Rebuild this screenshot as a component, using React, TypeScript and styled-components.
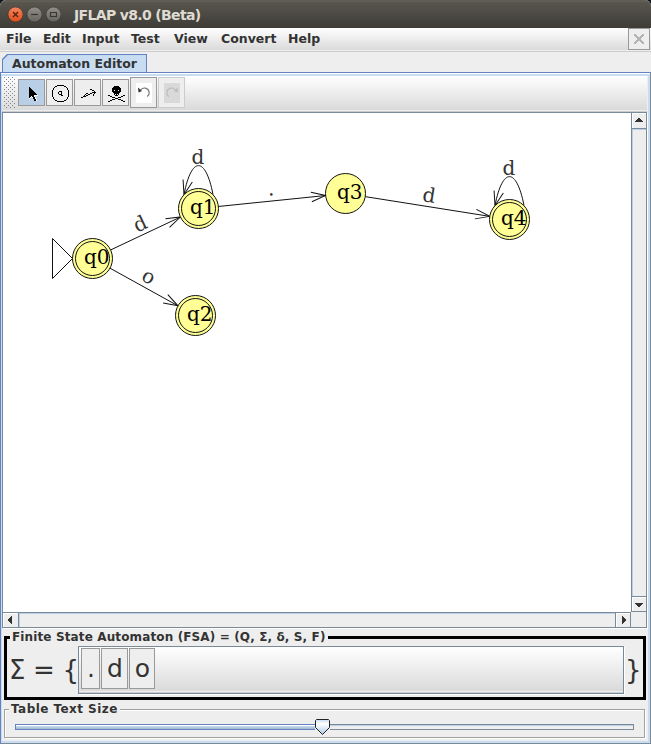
import React from 'react';
import styled, { createGlobalStyle, css } from 'styled-components';

const GlobalStyle = createGlobalStyle`
  * { box-sizing: border-box; }
  body { margin: 0; background: #eee; overflow: hidden; }
`;

const steel = '#7a8a99';
const blue = '#6382bf';
const paleBlue = '#c8ddf2';
const ink = '#333';

const Window = styled.div`
  width: 651px;
  height: 744px;
  display: flex;
  flex-direction: column;
  background: #eee;
  color: ${ink};
  font: bold 12.5px/16px 'DejaVu Sans', sans-serif;
  white-space: nowrap;
`;

const TitleBar = styled.header`
  height: 28px;
  flex: none;
  display: flex;
  align-items: center;
  padding-left: 7px;
  gap: 3px;
  border-radius: 6px 6px 0 0;
  background: linear-gradient(#55524a 0, #69665d 1px, #59564e 2px, #3d3c37 100%);
  box-shadow: 0 -6px 0 6px #11131c;
  clip-path: inset(0);
`;

const TitleText = styled.h1`
  margin: 2px 0 0 10px;
  font: bold 14px/18px 'DejaVu Sans', sans-serif;
  letter-spacing: -0.65px;
  color: #dfdbd2;
`;

const MenuBar = styled.nav`
  height: 24px;
  flex: none;
  display: flex;
  align-items: flex-start;
  padding-left: 6px;
  border-bottom: 1px solid #ccc;
  background: linear-gradient(#fff, #dadada 22px, #eee 22px);
`;

const MenuItem = styled.span<{ $w: number }>`
  width: ${p => p.$w}px;
  padding-top: 3px;
`;

const CloseButton = styled.button`
  width: 22px;
  height: 22px;
  margin: 0 1px 0 auto;
  padding: 0;
  border: 1px solid #999;
  background: #eee;
  display: flex;
`;

const TabStrip = styled.div`
  height: 20px;
  flex: none;
  padding: 2px 0 0 2px;
`;

const Tab = styled.div`
  width: 145px;
  height: 18px;
  padding: 2px 0 0 10px;
  background: ${blue};
  clip-path: polygon(5px 0, 100% 0, 100% 100%, 0 100%, 0 5px);
  position: relative;
  z-index: 0;
  &::before {
    content: '';
    position: absolute;
    z-index: -1;
    inset: 1px 1px 0 1px;
    background: ${paleBlue};
    clip-path: polygon(5px 0, 100% 0, 100% 100%, 0 100%, 0 5px);
  }
`;

const Frame = styled.main`
  flex: 1;
  min-height: 0;
  display: flex;
  flex-direction: column;
  border: 1px solid;
  border-color: ${blue} ${steel} ${steel} ${blue};
  box-shadow: inset 0 1px #fff, inset 0 3px ${paleBlue}, inset -2px 0 ${paleBlue},
    inset 0 -2px ${paleBlue}, inset 1px 0 ${paleBlue};
  padding: 3px 3px 3px 1px;
`;

const ToolBar = styled.div`
  height: 36px;
  flex: none;
  display: flex;
  align-items: center;
  padding: 0 0 2px 2px;
  border-bottom: 1px solid #ccc;
  background: linear-gradient(#fff, #dadada 34px, #eee 34px);
`;

const Grip = styled.div`
  width: 11px;
  height: 32px;
  margin-right: 3px;
  background:
    radial-gradient(circle at 0.5px 0.5px, #7f8790 0.7px, transparent 0.8px) 0 0 / 4px 4px,
    radial-gradient(circle at 0.5px 0.5px, #7f8790 0.7px, transparent 0.8px) 2px 2px / 4px 4px;
`;

const ToolButton = styled.button<{ $active?: boolean; $tall?: boolean; $disabled?: boolean }>`
  width: 27px;
  height: ${p => (p.$tall ? 31 : 27)}px;
  margin-right: 1px;
  padding: ${p => (p.$tall ? 0 : '2px 0 0 2px')};
  display: grid;
  place-items: center;
  border: 1px solid ${p => (p.$disabled ? '#ccc' : '#999')};
  background: ${p => (p.$active ? '#b8cfe5' : '#eee')};
  svg { display: block; }
`;

const ScrollPane = styled.div`
  height: 516px;
  width: 645px;
  flex: none;
  display: grid;
  grid-template: 499px 15px / 628px 15px;
  border: 1px solid ${steel};
  box-shadow: 1px 1px #fff;
`;

const Canvas = styled.div`
  background: #fff;
  svg { display: block; }
`;

const ScrollBar = styled.div<{ $vertical?: boolean }>`
  display: flex;
  background: #eee;
  ${p => p.$vertical
    ? css`flex-direction: column; border-left: 1px solid ${steel}; border-bottom: 1px solid ${steel};`
    : css`border-top: 1px solid ${steel}; border-right: 1px solid ${steel};`}
`;

const ScrollThumb = styled.div<{ $vertical?: boolean }>`
  flex: 1;
  border: solid ${steel};
  border-width: ${p => (p.$vertical ? '1px 0' : '0 1px')};
  box-shadow: inset 1px 1px #b8cfe5;
`;

const ArrowButton = styled.button<{ $w: number; $h: number }>`
  width: ${p => p.$w}px;
  height: ${p => p.$h}px;
  flex: none;
  border: 0;
  padding: 0;
  background: #eee;
  box-shadow: inset 1px 1px #fff;
  svg { display: block; }
`;

const Corner = styled.div`
  background: #eee;
`;

const Group = styled.fieldset<{ $heavy?: boolean }>`
  min-width: 0;
  height: ${p => (p.$heavy ? 71 : 37)}px;
  width: ${p => (p.$heavy ? 642 : 641)}px;
  flex: none;
  margin: ${p => (p.$heavy ? '1px 0 0 2px' : '1px 0 0 2px')};
  padding: 0;
  border: ${p => (p.$heavy ? '3px solid #000' : '1px solid #a0a0a0')};
  ${p => !p.$heavy && css`box-shadow: inset 1px 1px #fff, 1px 1px #fff;`}
`;

const Legend = styled.legend<{ $inset: number; $spacing: number }>`
  height: 16px;
  margin-left: ${p => p.$inset}px;
  padding: 0 2px;
  font-size: 12px;
  line-height: 16px;
  letter-spacing: ${p => p.$spacing}px;
  background: #eee;
`;

const AlphabetRow = styled.div`
  height: 49px;
  display: flex;
  align-items: flex-start;
  padding: 1px 0 0 2px;
  font: 26px/48px 'DejaVu Sans', sans-serif;
`;

const SetText = styled.span<{ $w: number; $shift?: number }>`
  width: ${p => p.$w}px;
  padding-left: ${p => p.$shift ?? 0}px;
  letter-spacing: ${p => (p.$shift ? 0 : -0.3)}px;
`;

const SymbolBar = styled.div`
  width: 546px;
  height: 48px;
  display: flex;
  gap: 1px;
  padding: 1px 0 0 2px;
  border: 1px solid ${steel};
  background: linear-gradient(#fff, #dadada 44px, #eee 44px, #eee 45px, #ccc 45px);
  box-shadow: 1px 1px #fff;
`;

const SymbolButton = styled.button<{ $w: number }>`
  width: ${p => p.$w}px;
  height: 41px;
  padding: 0 0 0 1px;
  border: 1px solid #999;
  background: #eee;
  color: ${ink};
  font: 25px/38px 'DejaVu Sans', sans-serif;
  text-align: center;
`;

const SliderRow = styled.div`
  height: 19px;
  display: flex;
  align-items: center;
  padding: 1px 10px 0 10px;
`;

const SliderFill = styled.div`
  width: 300px;
  height: 6px;
  border: 1px solid ${blue};
  border-right: 0;
  background: linear-gradient(#fff 1px, #c8ddf2 1px, #a3b8cc);
`;

const SliderRest = styled.div`
  flex: 1;
  height: 6px;
  border: 1px solid ${steel};
  border-left: 0;
  box-shadow: inset 0 1px #b8cfe5;
`;

const SliderThumb = styled.svg`
  display: block;
  width: 15px;
  height: 16px;
  flex: none;
`;

const RoundButton = ({ kind }: { kind: 'close' | 'min' | 'max' }) => (
  <svg width="16" height="18" viewBox="0 0 16 18">
    <defs>
      <linearGradient id={`g-${kind}`} x2="0" y2="1">
        <stop offset="0" stopColor={kind === 'close' ? '#f68660' : '#929088'} />
        <stop offset="1" stopColor={kind === 'close' ? '#df4c19' : '#65635b'} />
      </linearGradient>
    </defs>
    <circle cx="8.5" cy="9.5" r="7.5" fill={`url(#g-${kind})`} stroke="#33322e" strokeWidth=".6" />
    {kind === 'close' && <path d="M6 7l5 5m0-5l-5 5" stroke="#54200e" strokeWidth="1.3" />}
    {kind === 'min' && <path d="M5 9.5h7" stroke="#37352f" strokeWidth="1.2" />}
    {kind === 'max' && <path d="M5.5 7.5h6v4h-6z" fill="none" stroke="#37352f" strokeWidth="1.1" />}
  </svg>
);

/** Draws a bitmap icon: "#" is a black pixel, "o" a white one. */
const PixelIcon = ({ rows }: { rows: string[] }) => {
  const w = Math.max(...rows.map(r => r.length));
  const trace = (mark: string) =>
    rows.map((r, y) => [...r].map((c, x) => (c === mark ? `M${x} ${y}h1v1h-1z` : '')).join('')).join('');
  return (
    <svg width={w} height={rows.length} shapeRendering="crispEdges">
      <path d={trace('o')} fill="#fff" />
      <path d={trace('#')} fill="#000" />
    </svg>
  );
};

const cursorRows = [
  '...........',
  '..#........',
  '..##.......',
  '..###......',
  '..####.....',
  '..#####....',
  '..######...',
  '..#######..',
  '..########.',
  '..#####oooo',
  '..##o##o...',
  '..#o.o##o..',
  '..o...##o..',
  '.......##o.',
  '.......##o.',
];

const stateRows = [
  '.....#######.....',
  '...##.......##...',
  '..#...........#..',
  '.#.............#.',
  '.#.............#.',
  '#...............#',
  '#......###......#',
  '#.....#..#......#',
  '#.....#..#......#',
  '#......###......#',
  '#........##.....#',
  '#...............#',
  '.#.............#.',
  '.#.............#.',
  '..#...........#..',
  '...##.......##...',
  '.....#######.....',
];

const edgeRows = [
  '.........##....',
  '...........##..',
  '.............#.',
  '...........####',
  '.....##..##..#.',
  '....#..##...#..',
  '...#.##.....#..',
  '..###..........',
  '##.............',
];

const skullRows = [
  '......#####......',
  '.....#######.....',
  '....#########....',
  '....#########....',
  '....##.###.##....',
  '....#########....',
  '.....#######.....',
  '......#####......',
  '......#.#.#......',
  '##.....###.....##',
  '..##.........##..',
  '....###...###....',
  '.......###.......',
  '....###...###....',
  '..##.........##..',
  '##.............##',
];

const HistoryIcon = ({ redo }: { redo?: boolean }) => (
  <svg width="16" height="20" viewBox="0 0 16 20">
    <rect width="16" height="20" fill={redo ? '#d9d9d9' : '#fff'} />
    <g transform={redo ? 'translate(16 0) scale(-1 1)' : undefined} stroke={redo ? '#bcbcbc' : '#777'} fill="none">
      <path d="M4.5 7C7 4 12 4.5 13 8.500c.5 2-.4 4-1.8 5" strokeWidth="1.1" />
      <path d="M2 4.500l4 3.500-3.500 1.500z" fill={redo ? '#bcbcbc' : '#333'} stroke="none" />
    </g>
  </svg>
);

type Direction = 'up' | 'down' | 'left' | 'right';
const arrowShapes: Record<Direction, string> = {
  up: 'M6 5h2v1h1v1h1v1h1v1H3V8h1V7h1V6h1z',
  down: 'M3 6h8v1h-1v1h-1v1H8v1H6V9H5V8H4V7H3z',
  left: 'M9 3v8H8v-1H7V9H6V8H5V6h1V5h1V4h1V3z',
  right: 'M6 3v8h1v-1h1V9h1V8h1V6H9V5H8V4H7V3z',
};
const ScrollArrow = ({ to, w, h }: { to: Direction; w: number; h: number }) => (
  <ArrowButton $w={w} $h={h} aria-label={to}>
    <svg width={w} height={h} shapeRendering="crispEdges"><path d={arrowShapes[to]} fill={ink} /></svg>
  </ArrowButton>
);

const states = [
  { name: 'q0', x: 89.5, y: 145.5, final: true },
  { name: 'q1', x: 195.5, y: 95.5, final: true },
  { name: 'q2', x: 192.5, y: 202.5, final: true },
  { name: 'q3', x: 342.5, y: 80.5, final: false },
  { name: 'q4', x: 506.5, y: 106.5, final: true },
];

const edges = [
  { from: 0, to: 1, label: 'd', lx: 140, ly: 117 },
  { from: 0, to: 2, label: 'o', lx: 142.5, ly: 169.500 },
  { from: 1, to: 3, label: '.', lx: 268.5, ly: 82.5 },
  { from: 3, to: 4, label: 'd', lx: 425, ly: 89 },
];

const Head = ({ x, y, angle }: { x: number; y: number; angle: number }) => (
  <path d="M-14.3-4.8L0 0L-14.3 4.8" transform={`translate(${x} ${y}) rotate(${angle})`} />
);

const Automaton = () => (
  <svg
    width="628" height="499" fontFamily="'DejaVu Serif', serif" fontWeight="400" fontSize="20"
    fill="none" stroke="#111" strokeWidth="1"
  >
    <path d="M69.5 145.5L49.5 125.5V165.5Z" />
    {edges.map(e => {
      const a = states[e.from];
      const b = states[e.to];
      const t = Math.atan2(b.y - a.y, b.x - a.x);
      const deg = (t * 180) / Math.PI;
      const tipX = b.x - 20 * Math.cos(t);
      const tipY = b.y - 20 * Math.sin(t);
      return (
        <g key={`${e.from}-${e.to}`}>
          <path d={`M${a.x + 20 * Math.cos(t)} ${a.y + 20 * Math.sin(t)}L${tipX} ${tipY}`} />
          <Head x={tipX} y={tipY} angle={deg} />
          <text transform={`translate(${e.lx} ${e.ly}) rotate(${deg})`} textAnchor="middle" fill={ink} stroke="none">
            {e.label}
          </text>
        </g>
      );
    })}
    {[states[1], states[4]].map(s => (
      <g key={s.name}>
        <path d={`M${s.x + 14.5} ${s.y - 14}C${s.x + 7} ${s.y - 52.5} ${s.x - 7} ${s.y - 52.5} ${s.x - 14.5} ${s.y - 14}`} />
        <Head x={s.x - 14.5} y={s.y - 14} angle={105} />
        <text x={s.x - 0.5} y={s.y - 44.5} textAnchor="middle" fill={ink} stroke="none">d</text>
      </g>
    ))}
    {states.map(s => (
      <g key={s.name}>
        <circle cx={s.x} cy={s.y} r="20" fill="#ffff96" />
        {s.final && <circle cx={s.x} cy={s.y} r="17" />}
        <text x={s.x - 8.5} y={s.y + 5.5} fill="#000" stroke="none">{s.name}</text>
      </g>
    ))}
  </svg>
);

const menus: [string, number][] = [
  ['File', 37], ['Edit', 39], ['Input', 49], ['Test', 43], ['View', 47], ['Convert', 67], ['Help', 40],
];

export default function App() {
  return (
    <Window>
      <GlobalStyle />
      <TitleBar>
        <RoundButton kind="close" />
        <RoundButton kind="min" />
        <RoundButton kind="max" />
        <TitleText>JFLAP v8.0 (Beta)</TitleText>
      </TitleBar>
      <MenuBar>
        {menus.map(([name, w]) => <MenuItem key={name} $w={w}>{name}</MenuItem>)}
        <CloseButton aria-label="Close tab">
          <svg width="20" height="20" shapeRendering="crispEdges">
            <path d="M5 5h2v1h1v1h1v1h2V7h1V6h1V5h2v2h-1v1h-1v1h-1v2h1v1h1v1h1v2h-2v-1h-1v-1h-1v-1H9v1H8v1H7v1H5v-2h1v-1h1v-1h1V9H7V8H6V7H5z" fill="#b4b4b4" />
          </svg>
        </CloseButton>
      </MenuBar>
      <TabStrip><Tab>Automaton Editor</Tab></TabStrip>
      <Frame>
        <ToolBar>
          <Grip />
          <ToolButton $active><PixelIcon rows={cursorRows} /></ToolButton>
          <ToolButton><PixelIcon rows={stateRows} /></ToolButton>
          <ToolButton><PixelIcon rows={edgeRows} /></ToolButton>
          <ToolButton><PixelIcon rows={skullRows} /></ToolButton>
          <ToolButton $tall><HistoryIcon /></ToolButton>
          <ToolButton $tall $disabled><HistoryIcon redo /></ToolButton>
        </ToolBar>
        <ScrollPane>
          <Canvas><Automaton /></Canvas>
          <ScrollBar $vertical>
            <ScrollArrow to="up" w={14} h={15} />
            <ScrollThumb $vertical />
            <ScrollArrow to="down" w={14} h={14} />
          </ScrollBar>
          <ScrollBar>
            <ScrollArrow to="left" w={15} h={14} />
            <ScrollThumb />
            <ScrollArrow to="right" w={14} h={14} />
          </ScrollBar>
          <Corner />
        </ScrollPane>
        <Group $heavy>
          <Legend $inset={3} $spacing={0.13}>Finite State Automaton (FSA) = (Q, Σ, δ, S, F)</Legend>
          <AlphabetRow>
            <SetText $w={69}>Σ = {'{'}</SetText>
            <SymbolBar>
              <SymbolButton $w={19}>.</SymbolButton>
              <SymbolButton $w={27}>d</SymbolButton>
              <SymbolButton $w={26}>o</SymbolButton>
            </SymbolBar>
            <SetText $w={16} $shift={1}>{'}'}</SetText>
          </AlphabetRow>
        </Group>
        <Group>
          <Legend $inset={4} $spacing={0.45}>Table Text Size</Legend>
          <SliderRow>
            <SliderFill />
            <SliderThumb viewBox="0 0 15 16">
              <defs>
                <linearGradient id="thumb" x2="0" y2="1">
                  <stop offset="0" stopColor="#c8ddf2" />
                  <stop offset=".3" stopColor="#fff" />
                  <stop offset="1" stopColor="#a9c9ea" />
                </linearGradient>
              </defs>
              <path d="M1.5.5h12l1 1v7l-7 7-7-7v-7z" fill="url(#thumb)" stroke="#222" />
            </SliderThumb>
            <SliderRest />
          </SliderRow>
        </Group>
      </Frame>
    </Window>
  );
}
